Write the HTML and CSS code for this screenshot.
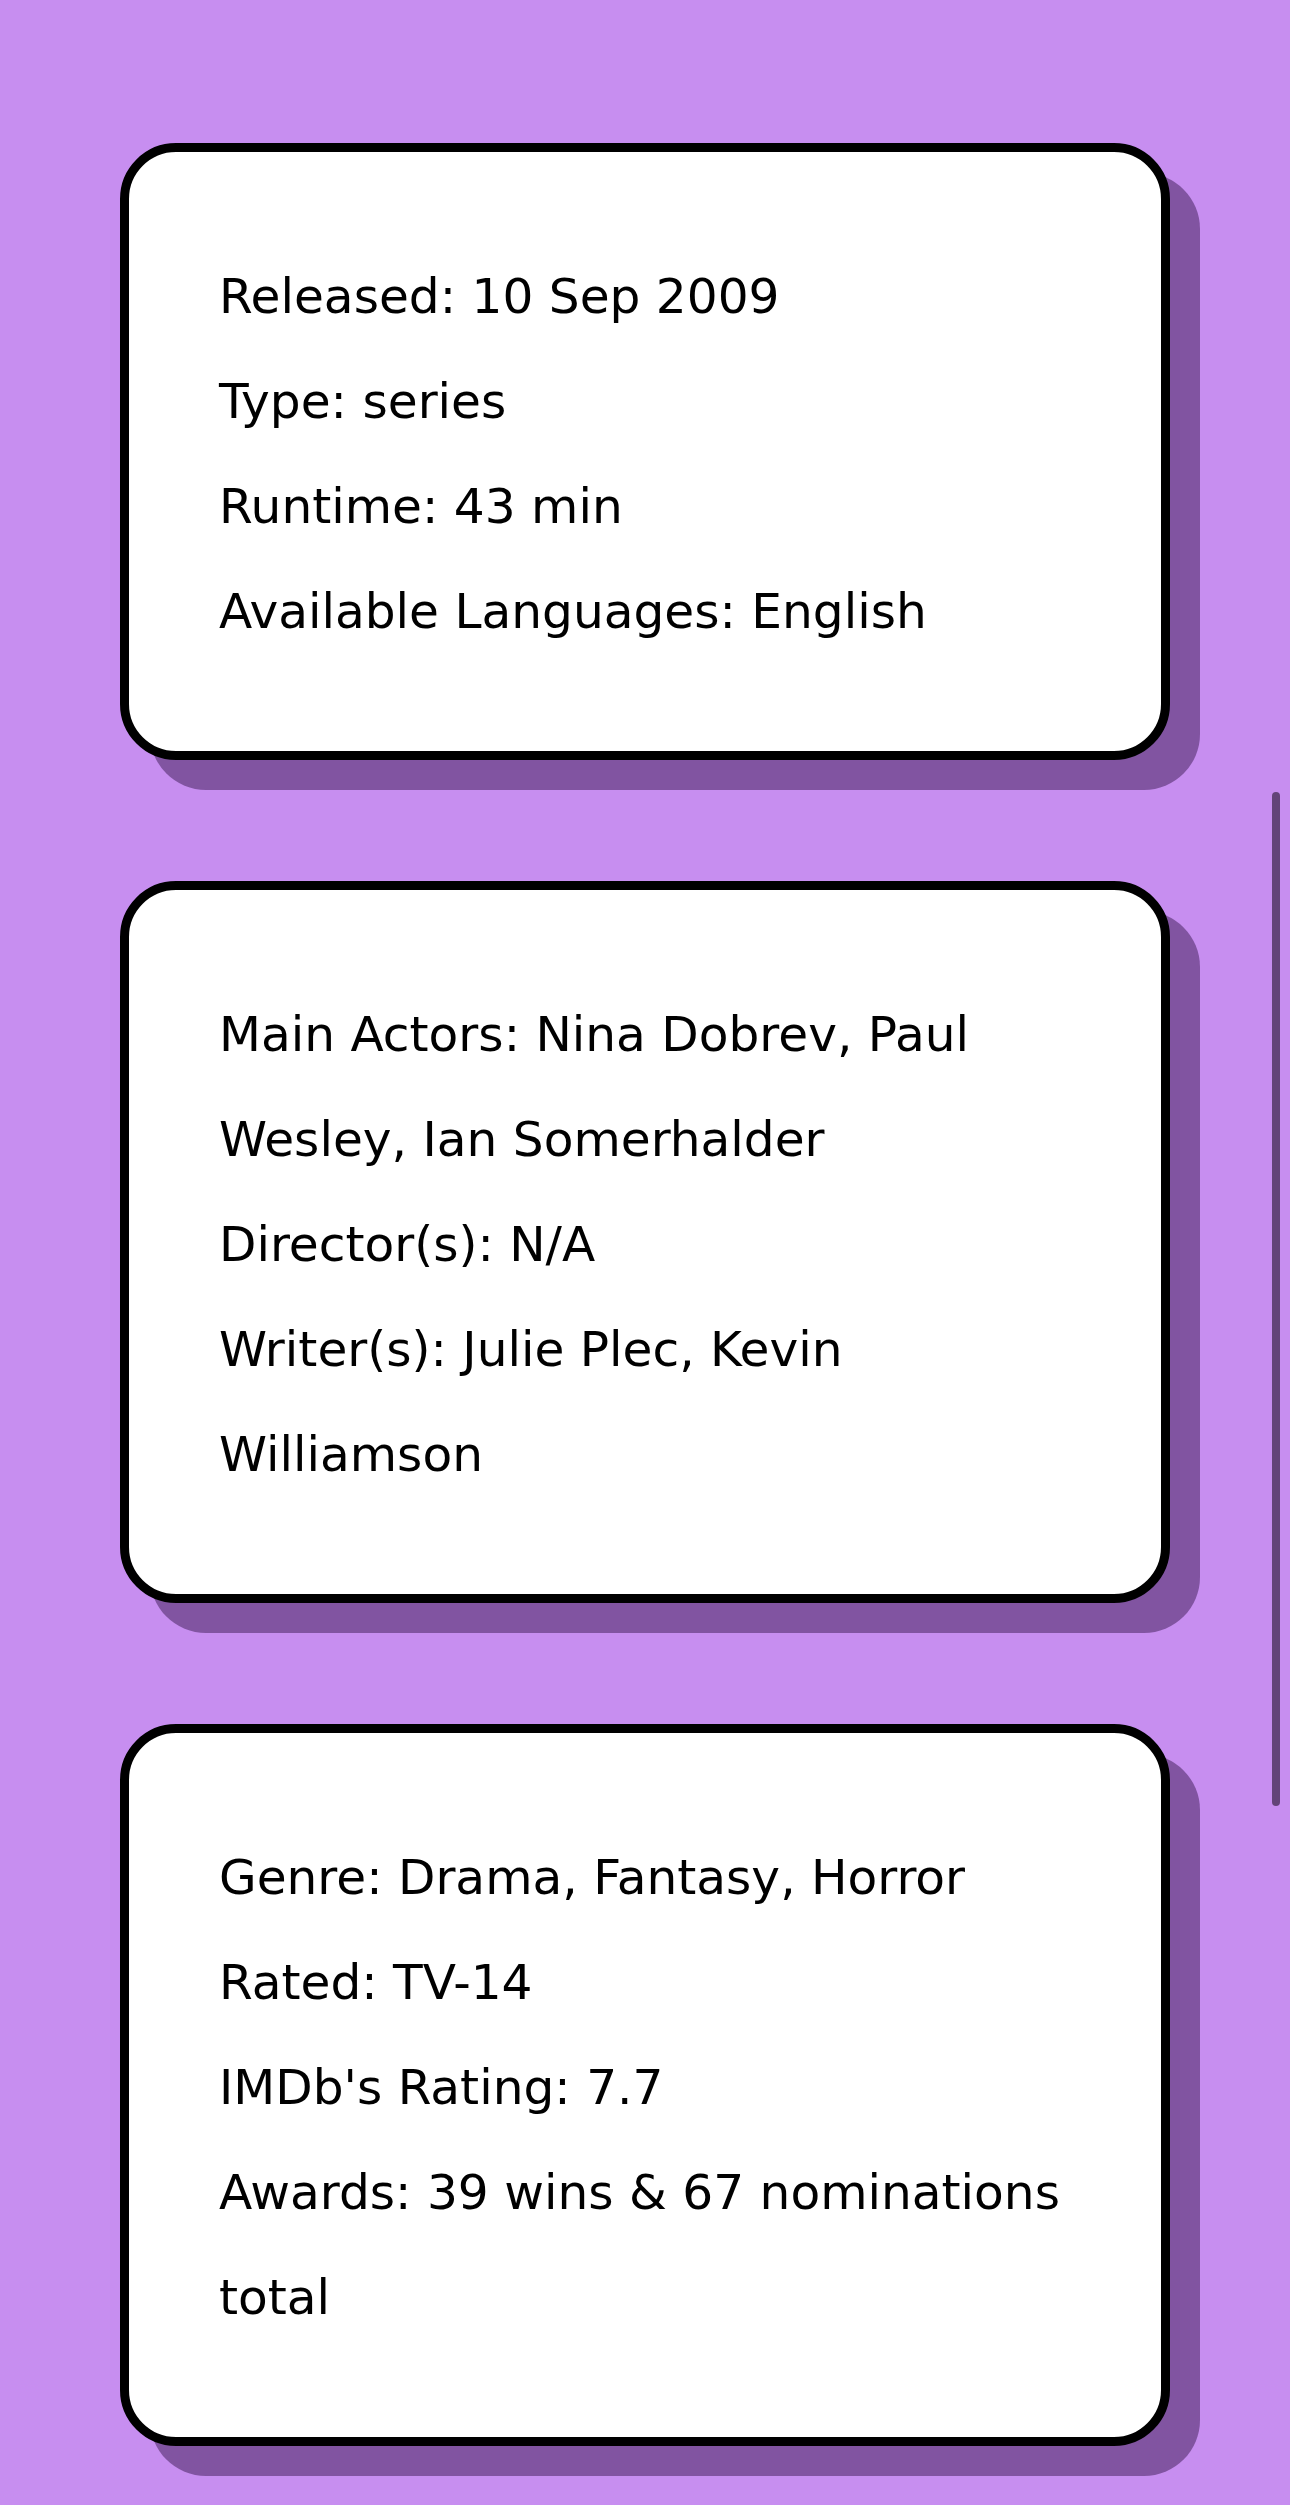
FILE: index.html
```html
<!DOCTYPE html>
<html lang="en">
<head>
<meta charset="utf-8">
<title>Show details</title>
<link rel="stylesheet" href="styles.css">
</head>
<body>
<main class="details">
  <section class="card">
    <p class="line">Released: 10 Sep 2009</p>
    <p class="line">Type: series</p>
    <p class="line">Runtime: 43 min</p>
    <p class="line">Available Languages: English</p>
  </section>
  <section class="card">
    <p class="line">Main Actors: Nina Dobrev, Paul Wesley, Ian Somerhalder</p>
    <p class="line">Director(s): N/A</p>
    <p class="line">Writer(s): Julie Plec, Kevin Williamson</p>
  </section>
  <section class="card">
    <p class="line">Genre: Drama, Fantasy, Horror</p>
    <p class="line">Rated: TV-14</p>
    <p class="line">IMDb's Rating: 7.7</p>
    <p class="line">Awards: 39 wins &amp; 67 nominations total</p>
  </section>
</main>
<div class="scroll-thumb"></div>
</body>
</html>
```
FILE: styles.css
```css
html, body {
  margin: 0;
  padding: 0;
}

body {
  background: #c78ef0;
  font-family: "DejaVu Sans", Verdana, sans-serif;
  color: #000;
  min-height: 2505px;
  position: relative;
}

.details {
  display: flex;
  flex-direction: column;
  gap: 121px;
  width: 1050px;
  margin: 0 auto;
  padding: 143px 0 58px;
}

.card {
  box-sizing: border-box;
  background: #fff;
  border: 9px solid #000;
  border-radius: 56px;
  box-shadow: 30px 30px 0 0 #8154a1;
  padding: 92px 86px 87px 90px;
}

.line {
  margin: 0;
  font-size: 48.6px;
  line-height: 105px;
}

.scroll-thumb {
  position: absolute;
  left: 1272px;
  top: 792px;
  width: 8px;
  height: 1014px;
  border-radius: 4px;
  background: #634478;
}
```
